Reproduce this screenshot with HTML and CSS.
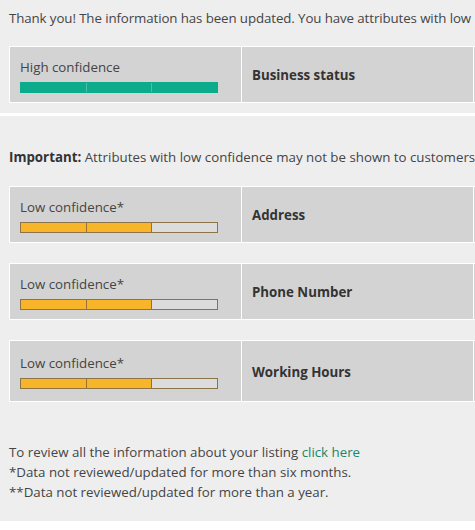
FILE: index.html
```html
<!DOCTYPE html>
<html lang="en">

<head>
    <meta charset="UTF-8">
    <meta name="viewport" content="width=device-width, initial-scale=1.0">
    <title>Listing confidence</title>
    <link rel="stylesheet" href="styles.css">
</head>

<body>
    <div class="panel panel-top">
        <p class="intro">Thank you! The information has been updated. You have attributes with low</p>
        <div class="status-row">
            <div class="cell cell-level">
                <span class="level">High confidence</span>
                <div class="meter meter-high">
                    <span class="seg filled"></span>
                    <span class="seg filled"></span>
                    <span class="seg filled"></span>
                </div>
            </div>
            <div class="cell cell-name">Business status</div>
            <div class="cell cell-action"></div>
        </div>
    </div>

    <div class="panel panel-main">
        <p class="notice"><strong>Important:</strong> Attributes with low confidence may not be shown to customers</p>

        <div class="status-row">
            <div class="cell cell-level">
                <span class="level">Low confidence*</span>
                <div class="meter meter-low">
                    <span class="seg filled"></span>
                    <span class="seg filled"></span>
                    <span class="seg"></span>
                </div>
            </div>
            <div class="cell cell-name">Address</div>
            <div class="cell cell-action"></div>
        </div>

        <div class="status-row">
            <div class="cell cell-level">
                <span class="level">Low confidence*</span>
                <div class="meter meter-low">
                    <span class="seg filled"></span>
                    <span class="seg filled"></span>
                    <span class="seg"></span>
                </div>
            </div>
            <div class="cell cell-name">Phone Number</div>
            <div class="cell cell-action"></div>
        </div>

        <div class="status-row status-row-tall">
            <div class="cell cell-level">
                <span class="level">Low confidence*</span>
                <div class="meter meter-low">
                    <span class="seg filled"></span>
                    <span class="seg filled"></span>
                    <span class="seg"></span>
                </div>
            </div>
            <div class="cell cell-name">Working Hours</div>
            <div class="cell cell-action"></div>
        </div>

        <div class="footnotes">
            <p>To review all the information about your listing <a href="#">click here</a></p>
            <p>*Data not reviewed/updated for more than six months.</p>
            <p>**Data not reviewed/updated for more than a year.</p>
        </div>
    </div>
</body>

</html>
```

FILE: styles.css
```css
body {
    font-family: 'Open Sans', 'Noto Sans', sans-serif;
    font-size: 13.3px;
    line-height: 20px;
    color: #454545;
    margin: 0;
    background-color: #ffffff;
    overflow: hidden;
}

p {
    margin: 0;
}

.panel {
    background-color: #eeeeee;
    padding-left: 9px;
}

.panel-top {
    padding-top: 8px;
    padding-bottom: 10px;
    margin-bottom: 3px;
}

.panel-main {
    padding-top: 31px;
    padding-bottom: 19px;
}

.intro {
    white-space: nowrap;
    letter-spacing: -0.1px;
    margin-bottom: 18px;
}

.notice {
    white-space: nowrap;
    margin-bottom: 19px;
}

.notice strong {
    color: #333333;
}

.status-row {
    display: flex;
    gap: 1px;
    padding: 1px;
    width: 700px;
    background-color: #ffffff;
    margin-bottom: 20px;
}

.panel-top .status-row {
    margin-bottom: 0;
}

.cell {
    background-color: #d3d3d3;
    height: 55px;
    box-sizing: border-box;
    padding: 0 10px;
}

.status-row-tall .cell {
    height: 60px;
    padding-top: 2px;
}

.cell-level {
    width: 231px;
    padding-top: 10px;
}

.status-row-tall .cell-level {
    padding-top: 12px;
}

.level {
    display: block;
    height: 25px;
}

.cell-name {
    width: 231px;
    display: flex;
    align-items: center;
    font-weight: bold;
    color: #333333;
}

.cell-action {
    flex: 1;
}

.meter {
    display: flex;
    width: 198px;
    height: 11px;
    box-sizing: border-box;
    border: 1px solid #7a7a7a;
    background-color: #dcdcdc;
}

.seg {
    flex: 1;
}

.seg + .seg {
    border-left: 1px solid #7a7a7a;
}

.meter-high {
    border-color: #0bab8c;
}

.meter-high .seg.filled {
    background-color: #0bab8c;
}

.meter-high .seg + .seg {
    border-left-color: #4dbfa6;
}

.meter-low {
    border-color: #8c7448;
}

.meter-low .seg.filled {
    background-color: #f8b52a;
}

.meter-low .seg + .seg {
    border-left-color: #9a7230;
}

.footnotes {
    margin-top: 40px;
}

.footnotes a {
    color: #18866a;
    text-decoration: none;
}
```
